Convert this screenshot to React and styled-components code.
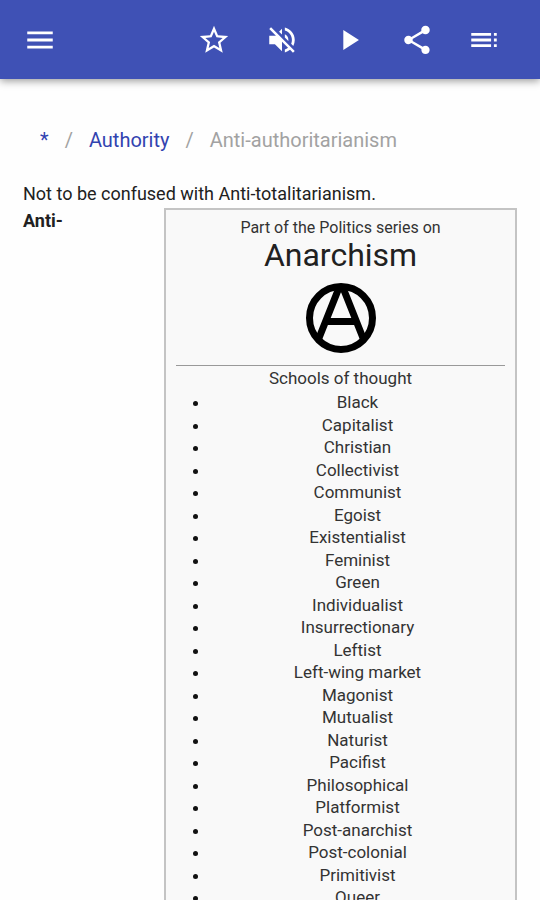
import React from 'react'
import styled, { createGlobalStyle } from 'styled-components'
import { MdMenu, MdStarBorder, MdVolumeOff, MdPlayArrow, MdShare, MdToc } from 'react-icons/md'

const GlobalStyle = createGlobalStyle`
	* {
		box-sizing: border-box;
	}

	body {
		margin: 0;
		background: #fefefe;
		color: #212121;
		font-family: Roboto, 'Liberation Sans', sans-serif;
		font-size: 18px;
	}
`

const Page = styled('div')`
	height: 100vh;
	overflow: hidden;
`

const Toolbar = styled('header')`
	display: flex;
	align-items: center;
	height: 79px;
	padding: 0 22px 0 6px;
	background: #3f51b5;
	box-shadow: 0 2px 8px rgba(0, 0, 0, 0.4);
`

const Actions = styled('div')`
	display: flex;
	margin-left: auto;
`

const IconButton = styled('button')`
	display: flex;
	align-items: center;
	justify-content: center;
	width: 12.5vw;
	max-width: 68px;
	height: 68px;
	padding: 0;
	border: 0;
	background: none;
	color: #fff;
	font-size: 34px;
	cursor: pointer;
`

const Breadcrumbs = styled('nav')`
	padding: 48px 40px 0;
	font-size: 20px;
	line-height: 26px;
`

const Trail = styled('ol')`
	display: flex;
	margin: 0;
	padding: 0;
	list-style: none;
	color: #a2a2a2;
`

const Crumb = styled('li')`
	& + &::before {
		content: '/';
		margin: 0 16px;
	}
`

const Link = styled('a')`
	color: #3243b0;
	text-decoration: none;
`

const Article = styled('main')`
	padding: 27px 23px 0;
	line-height: 27px;
`

const Hatnote = styled('p')`
	margin: 0;
`

const Sidebar = styled('aside')`
	float: right;
	width: 353px;
	max-width: 72%;
	margin: 1px 0 0 16px;
	padding: 7px 10px;
	border: 2px solid #c4c4c4;
	background: #f9f9f9;
	color: #333;
	font-size: 17px;
	text-align: center;
`

const Series = styled('div')`
	font-size: 16px;
	line-height: 22px;
`

const Title = styled('h1')`
	margin: 0;
	color: #212121;
	font-size: 32px;
	font-weight: 400;
	line-height: 32px;
`

const Emblem = styled('svg')`
	display: block;
	width: 72px;
	height: 72px;
	margin: 11px auto;
`

const Heading = styled('h2')`
	margin: 0;
	border-top: 1px solid #999;
	font-size: 17px;
	font-weight: 400;
	line-height: 24px;
`

const Schools = styled('ul')`
	margin: 0;
	padding: 1px 0 0 34px;
	line-height: 1.324;

	li::marker {
		color: #111;
	}
`

const schools = [
	'Black',
	'Capitalist',
	'Christian',
	'Collectivist',
	'Communist',
	'Egoist',
	'Existentialist',
	'Feminist',
	'Green',
	'Individualist',
	'Insurrectionary',
	'Leftist',
	'Left-wing market',
	'Magonist',
	'Mutualist',
	'Naturist',
	'Pacifist',
	'Philosophical',
	'Platformist',
	'Post-anarchist',
	'Post-colonial',
	'Primitivist',
	'Queer'
]

const CircleA = () => (
	<Emblem viewBox="0 0 72 72" fill="none" stroke="#000" strokeWidth="7" role="img" aria-label="Circle-A">
		<circle cx="36" cy="36" r="31.5" />
		<path d="M14 56 33.5 7h5L58 56M23 39.5h26" />
	</Emblem>
)

export default function App() {
	return (
		<Page>
			<GlobalStyle />

			<Toolbar>
				<IconButton type="button" aria-label="Menu"><MdMenu /></IconButton>
				<Actions>
					<IconButton type="button" aria-label="Favorite"><MdStarBorder /></IconButton>
					<IconButton type="button" aria-label="Unmute"><MdVolumeOff /></IconButton>
					<IconButton type="button" aria-label="Play"><MdPlayArrow /></IconButton>
					<IconButton type="button" aria-label="Share"><MdShare /></IconButton>
					<IconButton type="button" aria-label="Contents"><MdToc /></IconButton>
				</Actions>
			</Toolbar>

			<Breadcrumbs aria-label="Breadcrumb">
				<Trail>
					<Crumb><Link href="#home">*</Link></Crumb>
					<Crumb><Link href="#authority">Authority</Link></Crumb>
					<Crumb aria-current="page">Anti-authoritarianism</Crumb>
				</Trail>
			</Breadcrumbs>

			<Article>
				<Hatnote>Not to be confused with Anti-totalitarianism.</Hatnote>
				<Sidebar>
					<Series>Part of the Politics series on</Series>
					<Title>Anarchism</Title>
					<CircleA />
					<Heading>Schools of thought</Heading>
					<Schools>
						{schools.map(school => (
							<li key={school}>{school}</li>
						))}
					</Schools>
				</Sidebar>
				<b>Anti-</b>
			</Article>
		</Page>
	)
}
